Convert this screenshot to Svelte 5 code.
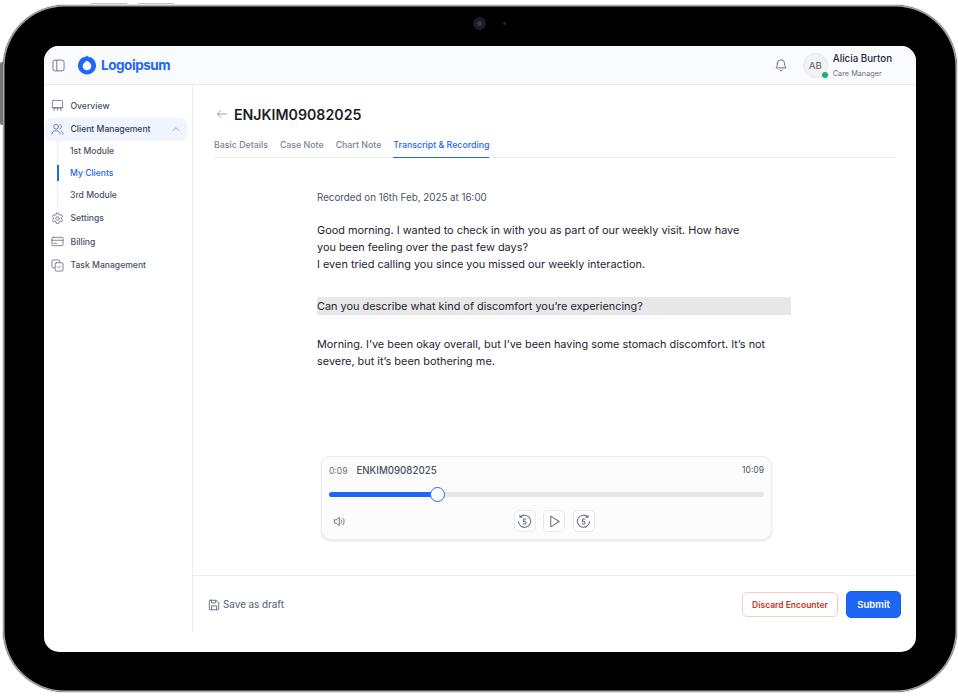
<script>
  const menuTop = [{ label: 'Overview', icon: 'overview' }];
  const modules = [
    { label: '1st Module', active: false },
    { label: 'My Clients', active: true },
    { label: '3rd Module', active: false }
  ];
  const tabs = ['Basic Details', 'Case Note', 'Chart Note', 'Transcript & Recording'];
</script>

<div class="stage">
  <div class="hw-top"><span></span><span></span></div>
  <div class="device">
    <div class="hw-left"></div>
    <div class="camera"><span class="lens"></span><span class="sensor"></span></div>
    <div class="screen">
      <header class="topbar">
        <div class="brand">
          <svg class="panel-icon" viewBox="0 0 14 14" fill="none" stroke="#667085" stroke-width="1"><rect x="1" y="1.2" width="12" height="11.6" rx="2.2"/><path d="M5.2 1.2v11.6"/></svg>
          <svg class="logo" viewBox="0 0 20 20"><path fill-rule="evenodd" fill="#1e66f5" d="M10 .4C10.700 1.500 12 2.100 13.800 2.340A9 9 0 1 1 6.200 2.340C8 2.100 9.300 1.500 10 .4ZM10 5.400C9.400 6.300 8 6.600 7 7.900A4.300 4.300 0 1 0 13 7.900C12 6.600 10.600 6.300 10 5.400Z"/></svg>
          <span class="logotext">Logoipsum</span>
        </div>
        <div class="user">
          <svg class="bell" viewBox="0 0 14 14" fill="none" stroke="#667085" stroke-width="1" stroke-linecap="round" stroke-linejoin="round"><path d="M3.400 5.400a3.600 3.600 0 0 1 7.200 0c0 3.100 1.400 4.500 1.400 4.500H2s1.400-1.400 1.400-4.500ZM5.700 12a1.500 1.500 0 0 0 2.600 0"/></svg>
          <div class="avatar">AB<span class="status"></span></div>
          <div class="who">
            <div class="name">Alicia Burton</div>
            <div class="role">Care Manager</div>
          </div>
        </div>
      </header>

      <div class="body">
        <aside class="sidebar">
          {#each menuTop as m}
            <div class="item">
              <svg class="ico" viewBox="0 0 14 14" fill="none" stroke="#667085" stroke-width=".9" stroke-linecap="round" stroke-linejoin="round"><rect x="1.500" y="1.500" width="11" height="8" rx="1"/><path d="M1 9.500h12M4 9.500l-1 3M10 9.500l1 3M7 9.500v2.500"/></svg>
              <span>{m.label}</span>
            </div>
          {/each}
          <div class="item open">
            <svg class="ico" viewBox="0 0 14 14" fill="none" stroke="#667085" stroke-width=".9" stroke-linecap="round" stroke-linejoin="round"><circle cx="5.500" cy="4" r="2.600"/><path d="M1 12c.3-2.500 2-3.700 4.500-3.700S9.700 9.500 10 12M9.500 1.600a2.500 2.500 0 0 1 0 4.800M11 8.700c1.200.5 1.900 1.600 2 3.300"/></svg>
            <span>Client Management</span>
            <svg class="chev" viewBox="0 0 10 10" fill="none" stroke="#98a2b3" stroke-width="1" stroke-linecap="round" stroke-linejoin="round"><path d="M2 6.500 5 3.700l3 2.800"/></svg>
          </div>
          <div class="sub">
            {#each modules as m}
              <div class="subitem" class:active={m.active}>{m.label}</div>
            {/each}
          </div>
          <div class="item">
            <svg class="ico" viewBox="0 0 14 14" fill="none" stroke="#667085" stroke-width=".9" stroke-linecap="round" stroke-linejoin="round"><circle cx="7" cy="7" r="1.900"/><path d="M5.800 1.200h2.400l.3 1.600 1.300.7 1.500-.6 1.200 2-1.200 1.100v1.500l1.200 1-1.200 2.100-1.500-.6-1.300.8-.3 1.500H5.800l-.3-1.500-1.300-.8-1.500.6-1.200-2.100 1.200-1V6L1.500 4.900l1.200-2 1.500.6 1.300-.7z"/></svg>
            <span>Settings</span>
          </div>
          <div class="item">
            <svg class="ico" viewBox="0 0 14 14" fill="none" stroke="#667085" stroke-width=".9" stroke-linecap="round" stroke-linejoin="round"><rect x="1" y="2.500" width="12" height="9" rx="1.200"/><path d="M1 5.700h12M3 8.900h3"/></svg>
            <span>Billing</span>
          </div>
          <div class="item">
            <svg class="ico" viewBox="0 0 14 14" fill="none" stroke="#667085" stroke-width=".9" stroke-linecap="round" stroke-linejoin="round"><path d="M4 9.500H2.300A1.300 1.300 0 0 1 1 8.200V2.300A1.300 1.300 0 0 1 2.300 1h5.900a1.300 1.300 0 0 1 1.300 1.300V4"/><rect x="4.500" y="4" width="8.500" height="9" rx="1.300"/><path d="m6.800 8.500 1.300 1.300 2.300-2.500"/></svg>
            <span>Task Management</span>
          </div>
        </aside>

        <main class="main">
          <div class="content">
            <div class="title-row">
              <svg class="back" viewBox="0 0 12 12" fill="none" stroke="#98a2b3" stroke-width="1" stroke-linecap="round" stroke-linejoin="round"><path d="M10.500 6h-9M5 2.500 1.500 6 5 9.500"/></svg>
              <h1>ENJKIM09082025</h1>
            </div>
            <nav class="tabs">
              {#each tabs as t, i}
                <div class="tab" class:current={i === 3}>{t}</div>
              {/each}
            </nav>

            <section class="transcript">
              <div class="recorded">Recorded on 16th Feb, 2025 at 16:00</div>
              <p class="para first">Good morning. I wanted to check in with you as part of our weekly visit. How have<br />you been feeling over the past few days?<br />I even tried calling you since you missed our weekly interaction.</p>
              <p class="para mark">Can you describe what kind of discomfort you’re experiencing?</p>
              <p class="para last">Morning. I’ve been okay overall, but I’ve been having some stomach discomfort. It’s not<br />severe, but it’s been bothering me.</p>
            </section>

            <section class="player">
              <div class="p-top">
                <div class="p-left"><span class="time">0:09</span><span class="file">ENKIM09082025</span></div>
                <span class="time end">10:09</span>
              </div>
              <div class="track"><div class="fill" style="width: 25%"></div><div class="thumb"></div></div>
              <div class="p-bottom">
                <svg class="vol" viewBox="0 0 14 14" fill="none" stroke="#667085" stroke-width="1" stroke-linecap="round" stroke-linejoin="round"><path d="M1.500 5.200v3.600h2L6.800 11.500v-9L3.500 5.200zM8.800 5.200a2.700 2.700 0 0 1 0 3.600M10.700 3.500a5 5 0 0 1 0 7"/></svg>
                <div class="controls">
                  <button class="ctl" aria-label="Back 5">
                    <svg viewBox="0 0 16 16" fill="none" stroke="#667085" stroke-width="1.100" stroke-linecap="round" stroke-linejoin="round"><path d="M3.300 3.300A6.500 6.500 0 1 1 1.600 8M3.100 1.300v2.200h2.200"/><path d="M9.600 5.300H7.100L6.800 8c1-.6 2.900-.4 2.900 1.200 0 1.600-2.100 1.900-3 1"/></svg>
                  </button>
                  <button class="ctl" aria-label="Play">
                    <svg viewBox="0 0 16 16" fill="none" stroke="#667085" stroke-width="1.100" stroke-linecap="round" stroke-linejoin="round"><path d="M4 2.300v11.400L13 8z"/></svg>
                  </button>
                  <button class="ctl" aria-label="Forward 5">
                    <svg viewBox="0 0 16 16" fill="none" stroke="#667085" stroke-width="1.100" stroke-linecap="round" stroke-linejoin="round"><path d="M12.700 3.300A6.500 6.500 0 1 0 14.400 8M12.900 1.300v2.200h-2.200"/><path d="M9.600 5.300H7.100L6.800 8c1-.6 2.900-.4 2.900 1.200 0 1.600-2.100 1.900-3 1"/></svg>
                  </button>
                </div>
              </div>
            </section>
          </div>

          <footer class="footer">
            <div class="draft">
              <svg viewBox="0 0 14 14" fill="none" stroke="#667085" stroke-width="1.100" stroke-linecap="round" stroke-linejoin="round"><path d="M2.500 1.500h7.300l2.700 2.700v7.300a1 1 0 0 1-1 1h-9a1 1 0 0 1-1-1v-9a1 1 0 0 1 1-1Z"/><path d="M4 1.500v3h5v-3M4 12.500V8h6v4.500"/></svg>
              <span>Save as draft</span>
            </div>
            <div class="actions">
              <button class="discard">Discard Encounter</button>
              <button class="submit">Submit</button>
            </div>
          </footer>
        </main>
      </div>
    </div>
  </div>
</div>

<style>
  :global(body) { margin: 0; background: #fff; }
  .stage {
    width: 958px; height: 696px; box-sizing: border-box; position: relative; overflow: hidden;
    padding: 5px 1px 4px 3px; background: #fff;
    font-family: Inter, "Liberation Sans", sans-serif; color: #101828;
  }
  .hw-top { position: absolute; top: 3px; left: 90px; display: flex; gap: 9px; }
  .hw-top span { width: 38px; height: 3px; background: #c4c4c4; border-radius: 2px 2px 0 0; }
  .hw-left { position: absolute; left: -3px; top: 57px; width: 3px; height: 63px; background: #777; border-radius: 2px 0 0 2px; }
  .device {
    position: relative; box-sizing: border-box; width: 954px; height: 687px; padding: 41px;
    background: #000; border-radius: 62px; box-shadow: 0 0 0 1px #e2e2e2, inset 0 0 0 1.500px #a8a8a8;
  }
  .camera { position: absolute; left: 470px; top: 12px; display: flex; align-items: center; gap: 17px; }
  .lens { width: 13px; height: 13px; border-radius: 50%; background: radial-gradient(circle, #2c3a4a 0 25%, #1a1d22 30% 100%); }
  .sensor { width: 3px; height: 3px; border-radius: 50%; background: #2a2a2a; }
  .screen {
    width: 872px; height: 606px; background: #fff; border-radius: 15px; overflow: hidden;
    display: flex; flex-direction: column;
  }
  .topbar {
    height: 39px; flex: none; box-sizing: border-box; background: #fafbff; border-bottom: 1px solid #eaecf0;
    display: flex; align-items: center; justify-content: space-between; padding: 0 24px 0 8px;
  }
  .brand { display: flex; align-items: center; }
  .panel-icon { width: 13px; height: 13px; margin-right: 11.500px; }
  .logo { width: 20px; height: 20px; margin-right: 4.500px; margin-top: -1px; }
  .logotext { font-size: 13.500px; font-weight: 700; color: #1e66f5; letter-spacing: -0.45px; }
  .user { display: flex; align-items: center; }
  .bell { width: 14px; height: 14px; margin-right: 15px; }
  .avatar {
    position: relative; width: 25px; height: 25px; border-radius: 50%; background: #f2f2f2; border: 1px solid #e8e8e8;
    box-sizing: border-box; display: flex; align-items: center; justify-content: center;
    font-size: 9.500px; font-weight: 500; color: #667085; margin-right: 5px;
  }
  .status { position: absolute; right: -1px; bottom: -1px; width: 6px; height: 6px; border-radius: 50%; background: #12b76a; }
  .name { font-size: 9.750px; font-weight: 500; color: #1d2939; line-height: 12px; margin-bottom: 4px; }
  .role { font-size: 7.300px; color: #667085; line-height: 9px; }

  .body { height: 547px; flex: none; display: flex; }
  .sidebar { width: 149px; flex: none; box-sizing: border-box; border-right: 1px solid #eaecf0; padding: 9px 5px 0 1px; }
  .item {
    height: 23px; display: flex; align-items: center; padding-left: 6px; font-size: 8.600px; font-weight: 500; color: #475467;
    border-radius: 6px; margin-bottom: .5px;
  }
  .item.open { background: #f0f4fe; color: #344054; }
  .ico { width: 13px; height: 13px; margin-right: 6.500px; flex: none; }
  .chev { width: 10px; height: 10px; margin-left: auto; margin-right: 6px; }
  .sub { margin-left: 12px; border-left: 1px solid #eaecf0; margin-top: -1.500px; margin-bottom: 1px; }
  .subitem { height: 22px; display: flex; align-items: center; padding-left: 12px; font-size: 8.600px; font-weight: 500; color: #475467; position: relative; }
  .subitem.active { color: #1e66f5; }
  .subitem.active::before { content: ""; position: absolute; left: -1px; top: 3px; bottom: 3px; width: 1.500px; background: #1e66f5; }

  .main { flex: 1; display: flex; flex-direction: column; min-width: 0; }
  .content { height: 491px; flex: none; box-sizing: border-box; padding: 0 20px 0 21px; border-bottom: 1px solid #eaecf0; }
  .title-row { display: flex; align-items: center; height: 20px; margin-top: 19px; }
  .back { width: 12px; height: 12px; margin: 0 6px 0 2px; }
  h1 { margin: 0; font-size: 14.200px; font-weight: 600; color: #1d1d1f; }
  .tabs { display: flex; height: 24px; margin-top: 10px; border-bottom: 1px solid #eaecf0; box-sizing: border-box; }
  .tab { margin-right: 12px; font-size: 8.800px; font-weight: 500; color: #7a8494; line-height: 16px; padding-top: 3px; height: 24px; box-sizing: border-box; }
  .tab.current { color: #1e66f5; border-bottom: 1px solid #1e66f5; }
  .transcript { margin: 0 0 0 103px; width: 474px; padding-top: 28px; }
  .recorded { font-size: 9.800px; color: #475467; line-height: 24px; height: 24px; }
  .para { margin: 0; font-size: 10.900px; line-height: 17px; color: #1d2433; }
  .first { margin-top: 12px; }
  .mark { margin-top: 23.500px; background: #e8e8e8; height: 18px; line-height: 18px; }
  .last { margin-top: 21.500px; }

  .player {
    margin: 86px 0 0 107px; width: 451px; height: 84px; box-sizing: border-box; padding: 6.500px 7px 0;
    background: #fcfcfc; border: 1px solid #eeeeee; border-radius: 10px; box-shadow: 0 1px 2px rgba(16, 24, 40, .14);
  }
  .p-top { display: flex; justify-content: space-between; align-items: flex-start; height: 14px; }
  .p-left { display: flex; align-items: center; gap: 9px; }
  .time { font-size: 8.500px; color: #667085; line-height: 14px; }
  .time.end { color: #475467; line-height: 12px; }
  .file { font-size: 9.700px; font-weight: 500; color: #475467; line-height: 14px; }
  .track { position: relative; height: 5px; margin-top: 14px; background: #e6e6e6; border-radius: 3px; }
  .fill { height: 5px; background: #1e66f5; border-radius: 3px; }
  .thumb { position: absolute; left: 101px; top: -5px; width: 15px; height: 15px; box-sizing: border-box; border-radius: 50%; background: #fff; border: 1.500px solid #1e66f5; }
  .p-bottom { position: relative; display: flex; align-items: center; justify-content: center; margin-top: 13px; height: 23px; }
  .vol { position: absolute; left: 4px; top: 5px; width: 13px; height: 13px; }
  .controls { display: flex; gap: 7.500px; margin-left: 15px; }
  .ctl { width: 22px; height: 22px; box-sizing: border-box; padding: 3px; background: #fff; border: 1px solid #e8e8e8; border-radius: 5px; display: flex; align-items: center; justify-content: center; }
  .ctl svg { width: 15px; height: 15px; flex: none; }

  .footer { height: 56px; flex: none; box-sizing: border-box; display: flex; align-items: center; justify-content: space-between; padding: 1px 15px 0 15px; }
  .draft { display: flex; align-items: center; gap: 3px; font-size: 9.800px; font-weight: 500; color: #667085; }
  .draft svg { width: 12px; height: 12px; }
  .actions { display: flex; align-items: center; gap: 8px; }
  button { font-family: inherit; cursor: pointer; }
  .discard { height: 25px; width: 96px; padding: 0; background: #fff; border: 1px solid #fbc8c4; border-radius: 5px; font-size: 8.500px; font-weight: 600; color: #c4332b; }
  .submit { height: 27px; width: 55px; padding: 0; background: #1e66f5; border: 1px solid #1a5ce0; border-radius: 5px; font-size: 9.600px; font-weight: 600; color: #fff; }
</style>
